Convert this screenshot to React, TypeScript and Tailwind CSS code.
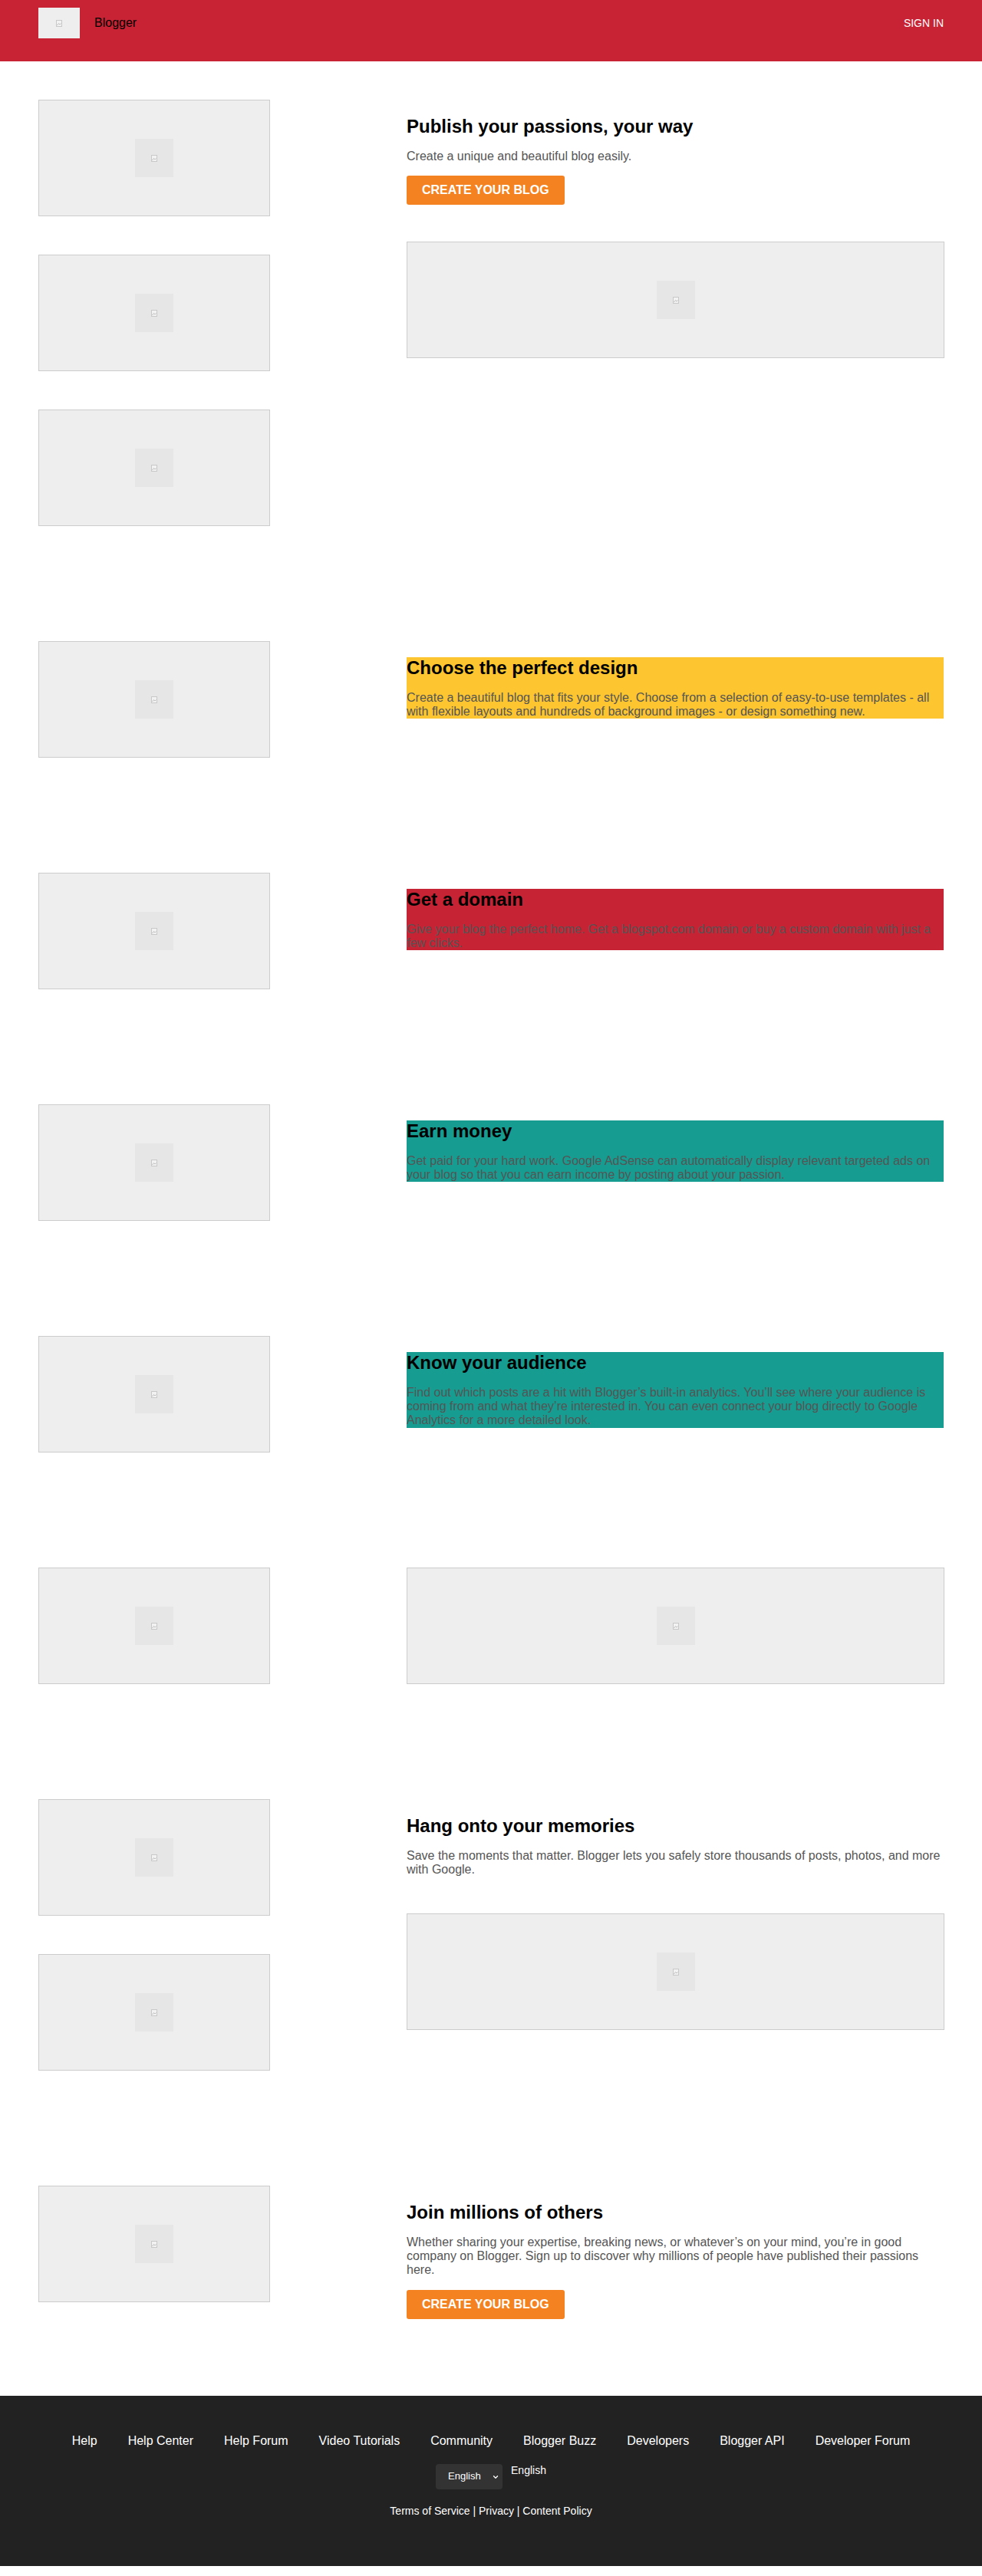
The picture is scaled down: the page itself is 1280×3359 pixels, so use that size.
import React from 'react';
import { ChevronDown } from 'lucide-react';

const font = { fontFamily: '"Liberation Sans", Arial, sans-serif' };

const footerLinks = [
    'Help',
    'Help Center',
    'Help Forum',
    'Video Tutorials',
    'Community',
    'Blogger Buzz',
    'Developers',
    'Blogger API',
    'Developer Forum',
];

// tiny "broken image" glyph that the browser shows for a missing picture
function BrokenGlyph() {
    return (
        <svg width="8" height="9" viewBox="0 0 8 9" fill="none">
            <rect x="0.5" y="0.5" width="7" height="8" fill="#f2f2f2" stroke="#c8c8c8" />
            <path d="M1.5 7 L3.5 4.5 L5 6 L6.5 4.5" stroke="#bcbcbc" strokeWidth="1" />
        </svg>
    );
}

function Placeholder({ className }: { className: string }) {
    return (
        <div className={`flex items-center justify-center border border-[#cccccc] bg-[#eeeeee] ${className}`}>
            <div className="flex h-[50px] w-[50px] items-center justify-center bg-[#e6e6e6]">
                <BrokenGlyph />
            </div>
        </div>
    );
}

function CreateButton() {
    return (
        <button className="rounded-[3px] bg-[#f58220] px-5 py-[10px] text-base font-bold leading-[1.15] text-white">
            CREATE YOUR BLOG
        </button>
    );
}

function Heading({ children }: { children: React.ReactNode }) {
    return <h2 className="mb-4 text-2xl font-bold leading-[1.15] text-black">{children}</h2>;
}

function Text({ children }: { children: React.ReactNode }) {
    return <p className="text-base leading-[1.15] text-[#555555]">{children}</p>;
}

function ColorBlock({ color, title, text }: { color: string; title: string; text: string }) {
    return (
        <div className="pt-[21px]">
            <div className={color}>
                <Heading>{title}</Heading>
                <Text>{text}</Text>
            </div>
        </div>
    );
}

function Section({ left, right }: { left: React.ReactNode; right: React.ReactNode }) {
    return (
        <section className="flex px-[50px] pb-[100px] pt-[50px]">
            <div className="flex w-[480px] shrink-0 flex-col gap-[50px]">{left}</div>
            <div className="w-[700px]">{right}</div>
        </section>
    );
}

export default function App() {
    return (
        <div className="bg-white pb-4" style={font}>
            {/* Header */}
            <header className="flex h-[80px] items-start justify-between bg-[#c82334] px-[50px] pt-[10px]">
                <div className="flex h-[40px] items-center gap-[19px]">
                    <div className="flex h-[40px] w-[54px] items-center justify-center bg-[#eeeeee]">
                        <BrokenGlyph />
                    </div>
                    <span className="text-base text-black">Blogger</span>
                </div>
                <div className="flex h-[40px] items-center">
                    <a className="text-sm text-white">SIGN IN</a>
                </div>
            </header>

            {/* Hero */}
            <Section
                left={
                    <>
                        <Placeholder className="h-[152px] w-[302px]" />
                        <Placeholder className="h-[152px] w-[302px]" />
                        <Placeholder className="h-[152px] w-[302px]" />
                    </>
                }
                right={
                    <div className="pt-[21px]">
                        <Heading>Publish your passions, your way</Heading>
                        <div className="mb-4">
                            <Text>Create a unique and beautiful blog easily.</Text>
                        </div>
                        <CreateButton />
                        <Placeholder className="mt-12 h-[152px] w-[701px]" />
                    </div>
                }
            />

            <Section
                left={<Placeholder className="h-[152px] w-[302px]" />}
                right={
                    <ColorBlock
                        color="bg-[#fdc52f]"
                        title="Choose the perfect design"
                        text="Create a beautiful blog that fits your style. Choose from a selection of easy-to-use templates - all with flexible layouts and hundreds of background images - or design something new."
                    />
                }
            />

            <Section
                left={<Placeholder className="h-[152px] w-[302px]" />}
                right={
                    <ColorBlock
                        color="bg-[#c62334]"
                        title="Get a domain"
                        text="Give your blog the perfect home. Get a blogspot.com domain or buy a custom domain with just a few clicks."
                    />
                }
            />

            <Section
                left={<Placeholder className="h-[152px] w-[302px]" />}
                right={
                    <ColorBlock
                        color="bg-[#169c90]"
                        title="Earn money"
                        text="Get paid for your hard work. Google AdSense can automatically display relevant targeted ads on your blog so that you can earn income by posting about your passion."
                    />
                }
            />

            <Section
                left={<Placeholder className="h-[152px] w-[302px]" />}
                right={
                    <ColorBlock
                        color="bg-[#169c90]"
                        title="Know your audience"
                        text="Find out which posts are a hit with Blogger’s built-in analytics. You’ll see where your audience is coming from and what they’re interested in. You can even connect your blog directly to Google Analytics for a more detailed look."
                    />
                }
            />

            <Section
                left={<Placeholder className="h-[152px] w-[302px]" />}
                right={<Placeholder className="h-[152px] w-[701px]" />}
            />

            <Section
                left={
                    <>
                        <Placeholder className="h-[152px] w-[302px]" />
                        <Placeholder className="h-[152px] w-[302px]" />
                    </>
                }
                right={
                    <div className="pt-[21px]">
                        <Heading>Hang onto your memories</Heading>
                        <Text>
                            Save the moments that matter. Blogger lets you safely store thousands of posts, photos, and more
                            with Google.
                        </Text>
                        <Placeholder className="mt-12 h-[152px] w-[701px]" />
                    </div>
                }
            />

            <Section
                left={<Placeholder className="h-[152px] w-[302px]" />}
                right={
                    <div className="pt-[21px]">
                        <Heading>Join millions of others</Heading>
                        <div className="mb-4">
                            <Text>
                                Whether sharing your expertise, breaking news, or whatever’s on your mind, you’re in good
                                company on Blogger. Sign up to discover why millions of people have published their passions
                                here.
                            </Text>
                        </div>
                        <CreateButton />
                    </div>
                }
            />

            {/* Footer */}
            <footer className="flex flex-col items-center bg-[#222222] pb-[64px] pt-[50px] text-white">
                <nav className="flex gap-10 text-base leading-[1.15]">
                    {footerLinks.map((link) => (
                        <a key={link}>{link}</a>
                    ))}
                </nav>
                <div className="mt-5 flex items-start gap-[11px]">
                    <div className="relative">
                        <select className="h-[33px] w-[87px] appearance-none rounded-[4px] bg-[#333333] pl-4 text-[13px] text-white outline-none">
                            <option>English</option>
                        </select>
                        <ChevronDown
                            className="pointer-events-none absolute right-[4px] top-[12px] h-[10px] w-[10px] text-white"
                            strokeWidth={3}
                        />
                    </div>
                    <span className="text-sm leading-[1.15]">English</span>
                </div>
                <div className="mt-5 text-sm leading-[1.15]">
                    <a>Terms of Service</a> | <a>Privacy</a> | <a>Content Policy</a>
                </div>
            </footer>
        </div>
    );
}
